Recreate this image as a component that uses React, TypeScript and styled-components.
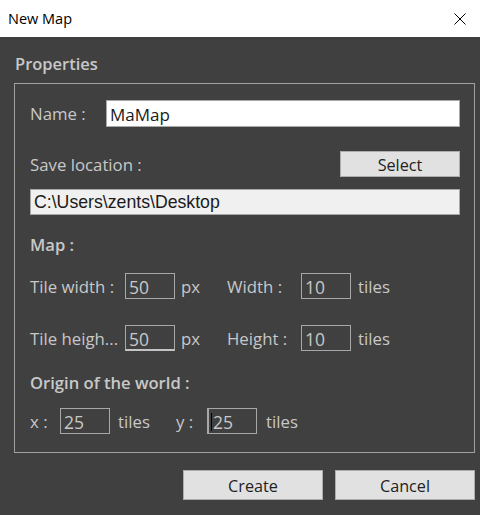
import React from "react";
import styled, {createGlobalStyle} from "styled-components";

const GlobalStyle = createGlobalStyle`
	html, body { margin: 0; padding: 0; background: #404040; }
	body { font-family: "Open Sans", "Noto Sans", sans-serif; }
`

const Window = styled.div`
	width: 480px;
	height: 515px;
	display: flex;
	flex-direction: column;
	background: #404040;
	overflow: hidden;
`
const TitleBar = styled.div`
	height: 37px;
	flex-shrink: 0;
	display: flex;
	align-items: center;
	justify-content: space-between;
	padding: 0 14px 0 8px;
	background: #ffffff;
	color: #000;
	font-size: 14.5px;
`
const CloseIcon = styled.svg`
	width: 12px;
	height: 12px;
	display: block;
`
const Body = styled.div`
	display: flex;
	flex-direction: column;
	padding: 16px 5px 14px 14px;
`
const GroupTitle = styled.div`
	height: 22px;
	line-height: 22px;
	margin-left: 1px;
	font-size: 16.5px;
	font-weight: 600;
	color: #c8c8c8;
`
const GroupBox = styled.div`
	margin-top: 8px;
	border: 1px solid #a0a0a0;
	padding: 16px 14px 18px 15px;
	display: flex;
	flex-direction: column;
`
const Row = styled.div<{ $mt?: number; $h?: number }>`
	display: flex;
	align-items: center;
	height: ${(p) => p.$h ?? 26}px;
	margin-top: ${(p) => p.$mt ?? 0}px;
`
const Label = styled.span<{ $w?: number }>`
	flex-shrink: 0;
	width: ${(p) => (p.$w ? `${p.$w}px` : "auto")};
	font-size: 16.8px;
	color: #c8c8c8;
	white-space: nowrap;
`
const SectionTitle = styled.span`
	font-size: 16.6px;
	font-weight: 600;
	color: #c8c8c8;
`
const Spacer = styled.div`
	flex: 1;
`
const WideInput = styled.div<{ $bg: string; $mono?: boolean }>`
	flex: 1;
	height: 100%;
	box-sizing: border-box;
	display: flex;
	align-items: center;
	padding: ${(p) => (p.$mono ? "0 0 0 3px" : "2px 0 0 3px")};
	background: ${(p) => p.$bg};
	border: 1px solid #a8a8a8;
	color: #1a1a1a;
	font-family: ${(p) => (p.$mono ? `"Liberation Sans", Arial, sans-serif` : `"Open Sans", "Noto Sans", sans-serif`)};
	font-size: ${(p) => (p.$mono ? 17.7 : 17)}px;
	white-space: nowrap;
`
const NumBox = styled.div<{ $hover?: boolean; $focus?: boolean }>`
	flex-shrink: 0;
	width: 50px;
	height: 100%;
	box-sizing: border-box;
	display: flex;
	align-items: center;
	padding-left: ${(p) => (p.$focus ? 2 : 3)}px;
	padding-top: 2px;
	border: 1px solid #a8a8a8;
	border-left-width: ${(p) => (p.$focus ? 2 : 1)}px;
	border-bottom: ${(p) => (p.$hover ? "2px solid #c4c4c4" : "1px solid #a8a8a8")};
	color: #c8c8c8;
	font-size: 17.5px;
`
const Caret = styled.span`
	width: 1px;
	height: 18px;
	margin-right: 1px;
	background: #000;
`
const Unit = styled.span<{ $ml: number; $w?: number }>`
	flex-shrink: 0;
	margin-left: ${(p) => p.$ml}px;
	width: ${(p) => (p.$w ? `${p.$w}px` : "auto")};
	font-size: 16.8px;
	color: #c8c8c8;
`
const Button = styled.button<{ $w: number }>`
	width: ${(p) => p.$w}px;
	height: ${(p) => (p.$w > 130 ? 30 : 26)}px;
	box-sizing: border-box;
	padding: 2px 0 0;
	background: #e1e1e1;
	border: 1px solid #adadad;
	color: #222;
	font-family: "Open Sans", "Noto Sans", sans-serif;
	font-size: 16.2px;
`
const Footer = styled.div`
	display: flex;
	justify-content: flex-end;
	gap: 12px;
	margin-top: 17px;
`

const App = () => {
	return (
		<Window>
			<GlobalStyle />
			<TitleBar>
				<span>New Map</span>
				<CloseIcon viewBox="0 0 12 12">
					<path d="M0.5 0.5 L11.5 11.5 M11.5 0.5 L0.5 11.5" stroke="#000" strokeWidth="1" fill="none" />
				</CloseIcon>
			</TitleBar>
			<Body>
				<GroupTitle>Properties</GroupTitle>
				<GroupBox>
					<Row $h={27}>
						<Label $w={76}>Name :</Label>
						<WideInput $bg="#ffffff">MaMap</WideInput>
					</Row>
					<Row $mt={24}>
						<Label>Save location :</Label>
						<Spacer />
						<Button $w={120}>Select</Button>
					</Row>
					<Row $mt={12}>
						<WideInput $bg="#f0f0f0" $mono>C:\Users\zents\Desktop</WideInput>
					</Row>
					<Row $mt={16}>
						<SectionTitle>Map :</SectionTitle>
					</Row>
					<Row $mt={16}>
						<Label $w={95}>Tile width :</Label>
						<NumBox>50</NumBox>
						<Unit $ml={6} $w={46}>px</Unit>
						<Label $w={74}>Width :</Label>
						<NumBox>10</NumBox>
						<Unit $ml={7}>tiles</Unit>
					</Row>
					<Row $mt={26}>
						<Label $w={95}>Tile heigh...</Label>
						<NumBox $hover>50</NumBox>
						<Unit $ml={6} $w={46}>px</Unit>
						<Label $w={74}>Height :</Label>
						<NumBox>10</NumBox>
						<Unit $ml={7}>tiles</Unit>
					</Row>
					<Row $mt={18}>
						<SectionTitle>Origin of the world :</SectionTitle>
					</Row>
					<Row $mt={13}>
						<Label $w={30}>x :</Label>
						<NumBox>25</NumBox>
						<Unit $ml={8} $w={58}>tiles</Unit>
						<Label $w={31}>y :</Label>
						<NumBox $focus><Caret />25</NumBox>
						<Unit $ml={9}>tiles</Unit>
					</Row>
				</GroupBox>
				<Footer>
					<Button $w={140}>Create</Button>
					<Button $w={140}>Cancel</Button>
				</Footer>
			</Body>
		</Window>
	);
};

export default App;
